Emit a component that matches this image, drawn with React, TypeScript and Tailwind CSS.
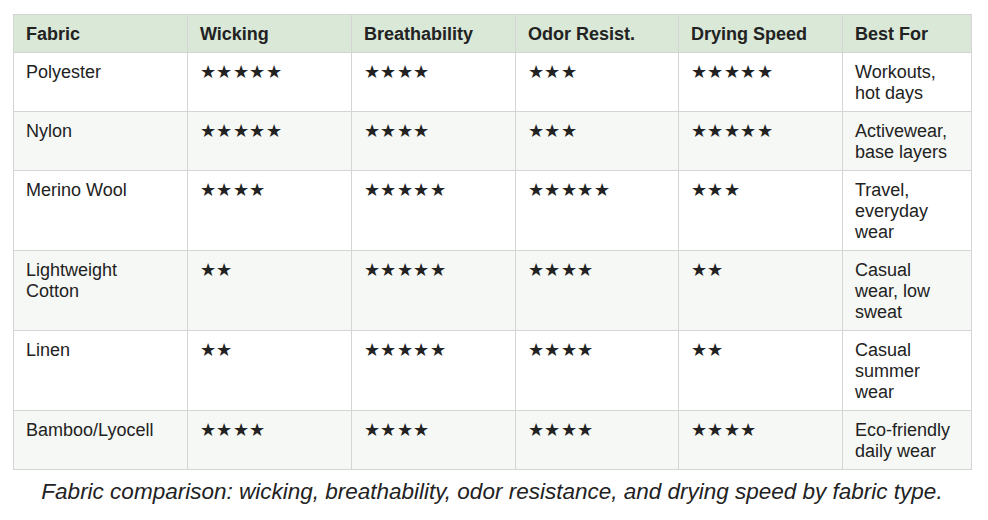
const rows = [
  { fabric: 'Polyester', wicking: 5, breath: 4, odor: 3, drying: 5, best: 'Workouts, hot days' },
  { fabric: 'Nylon', wicking: 5, breath: 4, odor: 3, drying: 5, best: 'Activewear, base layers' },
  { fabric: 'Merino Wool', wicking: 4, breath: 5, odor: 5, drying: 3, best: 'Travel, everyday wear' },
  { fabric: 'Lightweight Cotton', wicking: 2, breath: 5, odor: 4, drying: 2, best: 'Casual wear, low sweat' },
  { fabric: 'Linen', wicking: 2, breath: 5, odor: 4, drying: 2, best: 'Casual summer wear' },
  { fabric: 'Bamboo/Lyocell', wicking: 4, breath: 4, odor: 4, drying: 4, best: 'Eco-friendly daily wear' },
];

const headers = ['Fabric', 'Wicking', 'Breathability', 'Odor Resist.', 'Drying Speed', 'Best For'];
const widths = ['w-[174px]', 'w-[164px]', 'w-[164px]', 'w-[163px]', 'w-[164px]', 'w-[129px]'];

const stars = (n: number) => '★'.repeat(n);

export default function App() {
  return (
    <div className="bg-white w-[988px] h-[520px] pt-[14px] pl-[13px] font-['Liberation_Sans',Arial,sans-serif] text-[#222]">
      <table className="border-collapse table-fixed w-[958px] text-[18px] leading-[21px]">
        <thead>
          <tr className="bg-[#d9e8d7]">
            {headers.map((h, i) => (
              <th key={h} className={`${widths[i]} border border-[#d5d5d5] px-3 pt-[9px] pb-[7px] text-left font-bold`}>
                {h}
              </th>
            ))}
          </tr>
        </thead>
        <tbody>
          {rows.map((r, i) => (
            <tr key={r.fabric} className={i % 2 === 1 ? 'bg-[#f6f8f5]' : 'bg-white'}>
              <td className="border border-[#d5d5d5] px-3 pt-[9px] pb-[7px] align-top">{r.fabric}</td>
              <td className="border border-[#d5d5d5] px-3 pt-[9px] pb-[7px] align-top tracking-[0.4px]">{stars(r.wicking)}</td>
              <td className="border border-[#d5d5d5] px-3 pt-[9px] pb-[7px] align-top tracking-[0.4px]">{stars(r.breath)}</td>
              <td className="border border-[#d5d5d5] px-3 pt-[9px] pb-[7px] align-top tracking-[0.4px]">{stars(r.odor)}</td>
              <td className="border border-[#d5d5d5] px-3 pt-[9px] pb-[7px] align-top tracking-[0.4px]">{stars(r.drying)}</td>
              <td className="border border-[#d5d5d5] px-3 pt-[9px] pb-[7px] align-top">{r.best}</td>
            </tr>
          ))}
        </tbody>
      </table>
      <p className="w-[958px] text-center italic text-[22.5px] leading-[1.15] mt-[9px]">
        Fabric comparison: wicking, breathability, odor resistance, and drying speed by fabric type.
      </p>
    </div>
  );
}
